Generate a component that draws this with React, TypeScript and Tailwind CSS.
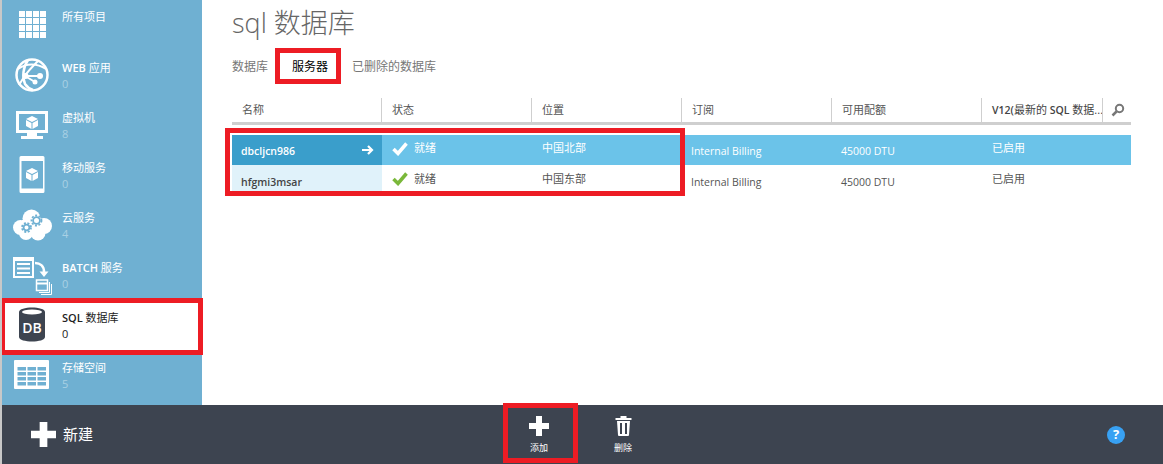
import React from 'react';

const GridIcon = () => (
  <svg width="60" height="50" viewBox="0 0 60 50" fill="#fff">
    {[0, 1, 2, 3].map((r) =>
      [0, 1, 2, 3].map((c) => <rect key={`${r}-${c}`} x={17 + c * 7} y={11 + r * 7} width="6" height="6" />)
    )}
  </svg>
);

const WebIcon = () => (
  <svg width="60" height="50" viewBox="0 0 60 50" fill="none" stroke="#fff">
    <circle cx="30" cy="25" r="15.5" strokeWidth="2.5" />
    <path d="M26 10 C21 17 20 27 23 34 C25 37 28 39 31 40" strokeWidth="2.5" />
    <path d="M16 19 C24 13 35 13 44 19" strokeWidth="2" />
    <path d="M36 11 C31 16 26 21 22 27 L17 35" strokeWidth="2" />
    <path d="M23 26 L39 26 M23 26 L33 32" strokeWidth="2" />
    <circle cx="23.5" cy="26" r="3" fill="#fff" stroke="none" />
    <circle cx="38" cy="26" r="3" fill="#fff" stroke="none" />
    <circle cx="33" cy="32" r="2.5" fill="#fff" stroke="none" />
  </svg>
);

const Cube = ({ x, y }: { x: number; y: number }) => (
  <g transform={`translate(${x} ${y})`}>
    <path d="M6 0 L12 3 L6 6 L0 3 Z" fill="#fff" />
    <path d="M0 4 L5.5 7 L5.5 13 L0 10 Z M12 4 L6.5 7 L6.5 13 L12 10 Z" fill="#fff" />
  </g>
);

const VmIcon = () => (
  <svg width="60" height="50" viewBox="0 0 60 50" fill="#fff">
    <path fillRule="evenodd" d="M14 11 H46 V33 H35 V36 H41 V39 H19 V36 H25 V33 H14 Z M17 14 V30 H43 V14 Z" />
    <Cube x={24} y={16} />
  </svg>
);

const MobileIcon = () => (
  <svg width="60" height="50" viewBox="0 0 60 50" fill="#fff">
    <path fillRule="evenodd" d="M19 6 H41 A1.5 1.5 0 0 1 42.5 7.5 V41.5 A1.5 1.5 0 0 1 41 43 H19 A1.5 1.5 0 0 1 17.5 41.5 V7.5 A1.5 1.5 0 0 1 19 6 Z M19.5 11 V38.5 H41 V11 Z" />
    <Cube x={24} y={18} />
  </svg>
);

const Gear = ({ cx, cy, r }: { cx: number; cy: number; r: number }) => (
  <g fill="none" stroke="#6fb0d2">
    <circle cx={cx} cy={cy} r={r} strokeWidth="1.8" strokeDasharray="2 1.6" />
    <circle cx={cx} cy={cy} r={r - 1.6} strokeWidth="1.8" />
  </g>
);

const CloudIcon = () => (
  <svg width="60" height="50" viewBox="0 0 60 50" fill="#fff">
    <circle cx="18.5" cy="27.5" r="7.5" />
    <circle cx="29.5" cy="18.5" r="9" />
    <circle cx="42" cy="26" r="8" />
    <circle cx="24" cy="33" r="7" />
    <circle cx="36" cy="33" r="7.5" />
    <rect x="20" y="20" width="22" height="14" />
    <Gear cx={24.5} cy={27.5} r={4.5} />
    <Gear cx={34.5} cy={20.5} r={5} />
  </svg>
);

const BatchIcon = () => (
  <svg width="60" height="50" viewBox="0 0 60 50">
    <path fillRule="evenodd" fill="#fff" d="M11 7 H32 V28 H11 Z M13 11 V26 H30 V11 Z" />
    <path d="M15 14 H28 M15 18.5 H28 M15 23 H28" stroke="#fff" strokeWidth="2" />
    <path d="M33 13 C38 13 42 16 42 22" fill="none" stroke="#fff" strokeWidth="2.5" />
    <path d="M37.5 21.5 H46.5 L42 27 Z" fill="#fff" />
    <rect x="34.5" y="30" width="11" height="10.5" fill="none" stroke="#fff" strokeWidth="1.5" />
    <path d="M35 33.5 H45" stroke="#fff" strokeWidth="2" />
    <path d="M47.5 32 V42.5 H37 M49.5 34 V44.5 H39" fill="none" stroke="#fff" strokeWidth="1" />
  </svg>
);

const DbIcon = () => (
  <svg width="60" height="50" viewBox="0 0 60 50">
    <path d="M17 12 C17 6 43 6 43 12 V37 C43 43 17 43 17 37 Z" fill="#3d4450" />
    <ellipse cx="30" cy="12" rx="10" ry="2.5" fill="#fff" />
    <text x="30" y="33" textAnchor="middle" fill="#fff" fontSize="14" fontWeight="600" fontFamily="'Open Sans', sans-serif">DB</text>
  </svg>
);

const StorageIcon = () => (
  <svg width="60" height="50" viewBox="0 0 60 50">
    <path d="M13 10 H46 A1 1 0 0 1 47 11 V38 A1 1 0 0 1 46 39 H13 A1 1 0 0 1 12 38 V11 A1 1 0 0 1 13 10 Z" fill="#fff" />
    {[0, 1, 2, 3].map((r) =>
      [0, 1, 2].map((c) => (
        <rect key={`${r}-${c}`} x={15.5 + c * 10} y={17 + r * 5} width="8.5" height="3.5" fill="#6fb0d2" />
      ))
    )}
  </svg>
);

const navItems = [
  { strong: '', label: '所有项目', count: '', icon: <GridIcon /> },
  { strong: 'WEB', label: ' 应用', count: '0', icon: <WebIcon /> },
  { strong: '', label: '虚拟机', count: '8', icon: <VmIcon /> },
  { strong: '', label: '移动服务', count: '0', icon: <MobileIcon /> },
  { strong: '', label: '云服务', count: '4', icon: <CloudIcon /> },
  { strong: 'BATCH', label: ' 服务', count: '0', icon: <BatchIcon /> },
  { strong: 'SQL', label: ' 数据库', count: '0', icon: <DbIcon />, active: true },
  { strong: '', label: '存储空间', count: '5', icon: <StorageIcon /> },
];

const columns = ['名称', '状态', '位置', '订阅', '可用配额'];

const rows = [
  { name: 'dbcljcn986', location: '中国北部', selected: true },
  { name: 'hfgmi3msar', location: '中国东部', selected: false },
];

const Check = ({ color }: { color: string }) => (
  <svg width="16" height="14" viewBox="0 0 16 14">
    <path d="M1.5 7 L6 11.5 L14.5 1.5" fill="none" stroke={color} strokeWidth="3.5" />
  </svg>
);

export default function App() {
  return (
    <div className="relative w-[1163px] h-[464px] flex flex-col overflow-hidden bg-white border-l-2 border-[#c8c8c8] text-[11px] font-['Open_Sans','Noto_Sans_CJK_SC',sans-serif]">
      <div className="flex h-[405px]">
        <div className="w-[200px] bg-[#6fb0d2] flex flex-col">
          {navItems.map((item, i) => (
            <div key={item.label} className={`flex h-[50px] ${item.active ? 'bg-white text-[#222]' : 'text-white'}`}>
              <div className="w-[60px] h-[50px]">{item.icon}</div>
              <div className={`leading-4 ${i === 0 ? 'pt-[9px]' : 'pt-[10px]'}`}>
                <div>
                  <span className="font-semibold">{item.strong}</span>
                  {item.label}
                </div>
                <div className={item.active ? '' : 'text-[#a9d0e4]'}>{item.count}</div>
              </div>
            </div>
          ))}
        </div>
        <div className="flex-1 pl-[30px] pr-[32px] text-[#555]">
          <h1 className="h-[48px] pt-[4px] text-[27px] leading-[38px] font-light text-[#666]">sql 数据库</h1>
          <div className="flex h-[38px] items-center text-xs text-[#777]">
            <span className="w-[43px]">数据库</span>
            <span className="ml-[17px] w-[53px] text-black">服务器</span>
            <span className="ml-[7px]">已删除的数据库</span>
          </div>
          <div className="mt-[12px] flex h-[24px] border-b-[3px] border-[#cfcfcf] box-content text-[#555]">
            {columns.map((c, i) => (
              <div key={c} className={`h-[24px] pl-[10px] leading-[24px] ${i > 0 ? 'w-[150px] border-l border-[#cfcfcf]' : 'w-[149px]'}`}>{c}</div>
            ))}
            <div className="w-[121px] h-[24px] pl-[10px] border-l border-[#cfcfcf] leading-[24px] whitespace-nowrap text-[#444]">
              <span className="font-semibold text-[10.5px]">V12(</span>最新的 <span className="font-semibold text-[10.5px]">SQL</span> 数据...
            </div>
            <div className="flex-1 h-[24px] border-l border-[#cfcfcf] flex items-center pl-[8px]">
              <svg width="14" height="14" viewBox="0 0 14 14" fill="none" stroke="#777">
                <circle cx="8.5" cy="5.5" r="3.7" strokeWidth="2" />
                <path d="M5.5 8.5 L1.5 12.5" strokeWidth="2.5" />
              </svg>
            </div>
          </div>
          <div className="mt-[10px]">
            {rows.map((row) => (
              <div key={row.name} className={`flex items-center ${row.selected ? 'h-[30px] bg-[#6bc3e9] text-white' : 'h-[31px] bg-white text-[#555]'}`}>
                <div className={`w-[150px] h-full flex items-center justify-between pl-[9px] pr-[8px] pt-[4px] font-semibold text-[10.5px] ${row.selected ? 'bg-[#3a9ecb]' : 'bg-[#e0f2fa] text-[#444]'}`}>
                  <span>{row.name}</span>
                  {row.selected && (
                    <svg className="-mt-[4px]" width="12" height="10" viewBox="0 0 12 10" fill="none" stroke="#fff" strokeWidth="2.2">
                      <path d="M0 5 H10 M6 1 L10 5 L6 9" />
                    </svg>
                  )}
                </div>
                <div className="w-[150px] pl-[10px] flex items-center gap-[6px] -mt-[3px]">
                  <Check color={row.selected ? '#fff' : '#7ab83a'} />
                  <span>就绪</span>
                </div>
                <div className="w-[150px] pl-[10px] -mt-[3px]">{row.location}</div>
                <div className="w-[150px] pl-[9px] pt-[4px] text-[10.5px]">Internal Billing</div>
                <div className="w-[150px] pl-[9px] pt-[4px] text-[10.5px]">45000 DTU</div>
                <div className="pl-[10px] -mt-[3px]">已启用</div>
              </div>
            ))}
          </div>
        </div>
      </div>
      <div className="h-[59px] bg-[#3d4450] flex items-center text-white">
        <div className="w-[501px] flex items-center pl-[29px] gap-[7px] text-[15px]">
          <svg width="25" height="25" viewBox="0 0 26 26" fill="#fff">
            <path d="M9 0 H17 V9 H26 V17 H17 V26 H9 V17 H0 V9 H9 Z" />
          </svg>
          <span>新建</span>
        </div>
        <div className="w-[72px] flex flex-col items-center gap-[6px] text-[9px] leading-3">
          <svg width="20" height="20" viewBox="0 0 20 20" fill="#fff">
            <path d="M7 0 H13 V7 H20 V13 H13 V20 H7 V13 H0 V7 H7 Z" />
          </svg>
          <span>添加</span>
        </div>
        <div className="ml-[12px] w-[72px] flex flex-col items-center gap-[6px] text-[9px] leading-3">
          <svg width="17" height="20" viewBox="0 0 16 20" fill="#fff">
            <path fillRule="evenodd" d="M0 2 H5 V0 H11 V2 H16 V4 H0 Z M1.5 5 H14.5 L13.5 19 A1 1 0 0 1 12.5 20 H3.5 A1 1 0 0 1 2.5 19 Z M4.5 7 V18 H6.5 V7 Z M9.5 7 V18 H11.5 V7 Z" />
          </svg>
          <span>删除</span>
        </div>
        <div className="ml-auto mr-[38px] w-[18px] h-[18px] rounded-full bg-[#38a1f3] flex items-center justify-center text-[13px] font-bold">?</div>
      </div>
      {/* red annotations over the screenshot */}
      <div className="absolute left-[-2px] top-[298px] w-[203px] h-[57px] border-[5px] border-[#ed1c24]" />
      <div className="absolute left-[273px] top-[48px] w-[66px] h-[36px] border-[5px] border-[#ed1c24]" />
      <div className="absolute left-[223px] top-[128px] w-[460px] h-[68px] border-[5px] border-[#ed1c24]" />
      <div className="absolute left-[501px] top-[403px] w-[75px] h-[60px] border-[5px] border-[#ed1c24]" />
    </div>
  );
}
